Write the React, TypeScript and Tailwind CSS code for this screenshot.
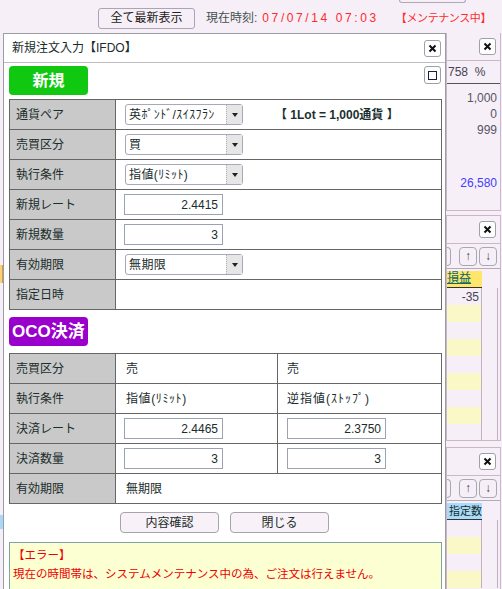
import React from "react";

const ink = "text-[#1a2c2c]";

const CloseBtn = () => (
  <div className="flex h-[17px] w-[17px] items-center justify-center rounded-[3px] border border-[#a0a0a8] bg-white">
    <svg width="9" height="9" viewBox="0 0 9 9">
      <path d="M1.5 1.5 L7.5 7.5 M7.5 1.5 L1.5 7.5" stroke="#111" strokeWidth="2" />
    </svg>
  </div>
);

const Arrow = () => (
  <div className="flex w-[16px] items-center justify-center border-l border-dotted border-[#b0b0b0] bg-[#e6e6e6]">
    <div className="h-0 w-0 border-x-[3px] border-t-[4px] border-x-transparent border-t-[#222]" />
  </div>
);

const Select = ({ value }: { value: string }) => (
  <div className="flex h-[21px] w-[118px] rounded-[3px] border border-[#a8a8b8] bg-white">
    <div className="flex flex-1 items-center pl-[3px] text-[12px] tracking-[0.4px]">{value}</div>
    <Arrow />
  </div>
);

const Input = ({ value }: { value: string }) => (
  <div className="flex h-[21px] w-[99px] items-center justify-end border border-[#9aa2b4] bg-white pr-[4px] text-[12px]">
    {value}
  </div>
);

const Label = ({ text }: { text: string }) => (
  <div className="flex h-full w-[106px] shrink-0 items-center border-r border-[#666] bg-[#c8c9c8] pl-[6px] text-[12px]">
    {text}
  </div>
);

const Row = ({ children, last }: { children: React.ReactNode; last?: boolean }) => (
  <div className={last ? "flex h-[29px]" : "flex h-[30px] border-b border-[#666]"}>{children}</div>
);

const Section = ({ label, color }: { label: string; color: string }) => (
  <div className={`flex h-[29px] w-[79px] items-center rounded-[4px] text-[16px] font-bold text-white ${color}`}>
    {label}
  </div>
);

const Btn = ({ text }: { text: string }) => (
  <div className="flex h-[21px] w-[99px] items-center justify-center rounded-[4px] border border-[#a4a4ac] bg-[#f8f2f8] text-[12px]">
    {text}
  </div>
);

const PanelHead = () => (
  <>
    <div className="flex h-[28px] items-center justify-end border-b border-[#c8b8c8] pr-[4px]">
      <CloseBtn />
    </div>
    <div className="flex h-[25px] items-center justify-end gap-[2px] border-b border-[#b8a8b8] pr-[3px]">
      <div className="mr-auto h-[19px] w-[4px] rounded-r-[4px] border-y border-r border-[#a8a8b0]" />
      <div className="flex h-[19px] w-[18px] items-center justify-center rounded-[4px] border border-[#a8a8b0] text-[12px] text-[#445]">↑</div>
      <div className="flex h-[19px] w-[18px] items-center justify-center rounded-[4px] border border-[#a8a8b0] text-[12px] text-[#445]">↓</div>
    </div>
  </>
);

const Stripes = ({ first, n }: { first: string; n: number }) => (
  <div className="flex">
    <div className="w-[35px] border-r border-[#c0b0c0]">
      {Array.from({ length: n }).map((_, i) => (
        <div
          key={i}
          className={i % 2 === 0 ? "h-[17px] pr-[2px] text-right text-[12px] text-[#445]" : "h-[17px] bg-[#fbf8c8]"}
        >
          {i === 0 ? first : ""}
        </div>
      ))}
    </div>
    <div className="w-[16px] border-r border-[#c0b0c0]" />
  </div>
);

export default function App() {
  return (
    <div
      className={`relative h-[589px] w-[502px] overflow-hidden bg-[#f7eff7] ${ink}`}
      style={{ fontFamily: '"Liberation Sans", "Noto Sans CJK JP", sans-serif' }}
    >
      {/* top bar */}
      <div className="h-[3px]">
        <div className="ml-[399px] h-[3px] w-[67px] rounded-b-[3px] border-x border-b border-[#b0a8b8]" />
      </div>
      <div className="flex h-[30px] items-center pl-[98px] text-[12px]">
        <div className="flex h-[21px] w-[97px] items-center justify-center rounded-[3px] border border-[#aaa4b4] text-[#222]">
          全て最新表示
        </div>
        <span className="ml-[11px] text-[#445050]">現在時刻:</span>
        <span className="ml-[5px] tracking-[2.6px] text-[#ff2a2a]">07/07/14 07:03</span>
        <span className="ml-[17px] text-[11px] tracking-[-0.4px] text-[#ff2a2a]">【メンテナンス中】</span>
      </div>

      {/* page behind */}
      <div className="flex">
        <div className="w-[3px] shrink-0">
          <div className="mt-[232px] h-[18px] border-r border-[#c0a060] bg-[#ffd070]" />
          <div className="mt-[232px] h-[14px] bg-[#a8d8f8]" />
        </div>
        <div className="w-[443px] shrink-0" />
        <div className="w-[55px] shrink-0">
          {/* panel 1 */}
          <div className="h-[178px] border-x border-b border-[#c8b8c8]">
            <div className="flex h-[28px] items-center justify-end border-b border-[#c8b8c8] pr-[4px]">
              <CloseBtn />
            </div>
            <div className="flex h-[23px] items-center border-b border-[#555] pl-[1px] text-[12px] text-[#445]">758&nbsp; %</div>
            <div className="pr-[3px] text-right text-[12px] leading-[16px] text-[#556]">
              <div className="mt-[6px]">1,000</div>
              <div>0</div>
              <div>999</div>
              <div className="mt-[37px] text-[#4040ff]">26,580</div>
            </div>
          </div>
          {/* panel 2 */}
          <div className="mt-[4px] h-[226px] border border-[#c8b8c8]">
            <PanelHead />
            <div className="mt-[2px] flex">
              <div className="flex h-[17px] w-[35px] items-end border-b border-[#333] bg-[#ffe66a] text-[12px] text-[#0a6a6a] underline">
                損益
              </div>
            </div>
            <Stripes first="-35" n={9} />
          </div>
          {/* panel 3 */}
          <div className="mt-[6px] h-[200px] border border-[#c8b8c8]">
            <PanelHead />
            <div className="mt-[2px] flex h-[17px] w-[35px] items-center justify-end border-b border-[#333] bg-[#a8dcfa] text-[11px] whitespace-nowrap">
              指定数
            </div>
            <Stripes first="" n={4} />
          </div>
        </div>
      </div>

      {/* modal */}
      <div className="absolute left-[3px] top-[33px] h-[600px] w-[443px] border border-[#9c9ca4] bg-white">
        <div className="flex h-[29px] items-center justify-between border-b border-[#c0bcc4] pl-[8px] pr-[4px]">
          <span className="text-[12px]">新規注文入力【IFDO】</span>
          <CloseBtn />
        </div>
        <div className="px-[5px]">
          <div className="mt-[3px] flex items-start justify-between">
            <Section label="新規" color="justify-center bg-[#10c810]" />
            <div className="mr-[-1px] flex h-[18px] w-[17px] items-center justify-center rounded-[3px] border border-[#9ca0a8] bg-white">
              <div className="h-[9px] w-[9px] border border-[#1a2040]" />
            </div>
          </div>
          <div className="mt-[4px] w-[433px] border border-[#666]">
            <Row>
              <Label text="通貨ペア" />
              <div className="flex items-center pl-[9px]">
                <Select value="英ﾎﾟﾝﾄﾞ/ｽｲｽﾌﾗﾝ" />
                <span className="ml-[32px] text-[12px] font-bold text-[#1a3030]">【 1Lot = 1,000通貨 】</span>
              </div>
            </Row>
            <Row>
              <Label text="売買区分" />
              <div className="flex items-center pl-[9px]">
                <Select value="買" />
              </div>
            </Row>
            <Row>
              <Label text="執行条件" />
              <div className="flex items-center pl-[9px]">
                <Select value="指値(ﾘﾐｯﾄ)" />
              </div>
            </Row>
            <Row>
              <Label text="新規レート" />
              <div className="flex items-center pl-[8px]">
                <Input value="2.4415" />
              </div>
            </Row>
            <Row>
              <Label text="新規数量" />
              <div className="flex items-center pl-[8px]">
                <Input value="3" />
              </div>
            </Row>
            <Row>
              <Label text="有効期限" />
              <div className="flex items-center pl-[9px]">
                <Select value="無期限" />
              </div>
            </Row>
            <Row last>
              <Label text="指定日時" />
            </Row>
          </div>

          <div className="mt-[7px]">
            <Section label="OCO決済" color="pl-[3px] bg-[#9a00cc] text-[17px]" />
          </div>
          <div className="mt-[7px] w-[433px] border border-[#666]">
            <Row>
              <Label text="売買区分" />
              <div className="flex w-[162px] items-center border-r border-[#666] pl-[10px] text-[12px]">売</div>
              <div className="flex items-center pl-[9px] text-[12px]">売</div>
            </Row>
            <Row>
              <Label text="執行条件" />
              <div className="flex w-[162px] items-center border-r border-[#666] pl-[10px] text-[12px] tracking-[0.6px]">指値(ﾘﾐｯﾄ)</div>
              <div className="flex items-center pl-[9px] text-[12px] tracking-[1px]">逆指値(ｽﾄｯﾌﾟ)</div>
            </Row>
            <Row>
              <Label text="決済レート" />
              <div className="flex w-[162px] items-center border-r border-[#666] pl-[8px]">
                <Input value="2.4465" />
              </div>
              <div className="flex items-center pl-[9px]">
                <Input value="2.3750" />
              </div>
            </Row>
            <Row>
              <Label text="決済数量" />
              <div className="flex w-[162px] items-center border-r border-[#666] pl-[8px]">
                <Input value="3" />
              </div>
              <div className="flex items-center pl-[9px]">
                <Input value="3" />
              </div>
            </Row>
            <Row last>
              <Label text="有効期限" />
              <div className="flex items-center pl-[10px] text-[12px]">無期限</div>
            </Row>
          </div>

          <div className="mt-[8px] flex justify-center gap-[11px]">
            <Btn text="内容確認" />
            <Btn text="閉じる" />
          </div>

          <div className="mt-[9px] h-[60px] w-[433px] border border-[#7fa4a4] bg-[#fbffd2] pl-[3px] pt-[3px] text-[11.5px] leading-[19px] text-[#f00000]">
            <div>【エラー】</div>
            <div>現在の時間帯は、システムメンテナンス中の為、ご注文は行えません。</div>
          </div>
        </div>
      </div>
    </div>
  );
}
